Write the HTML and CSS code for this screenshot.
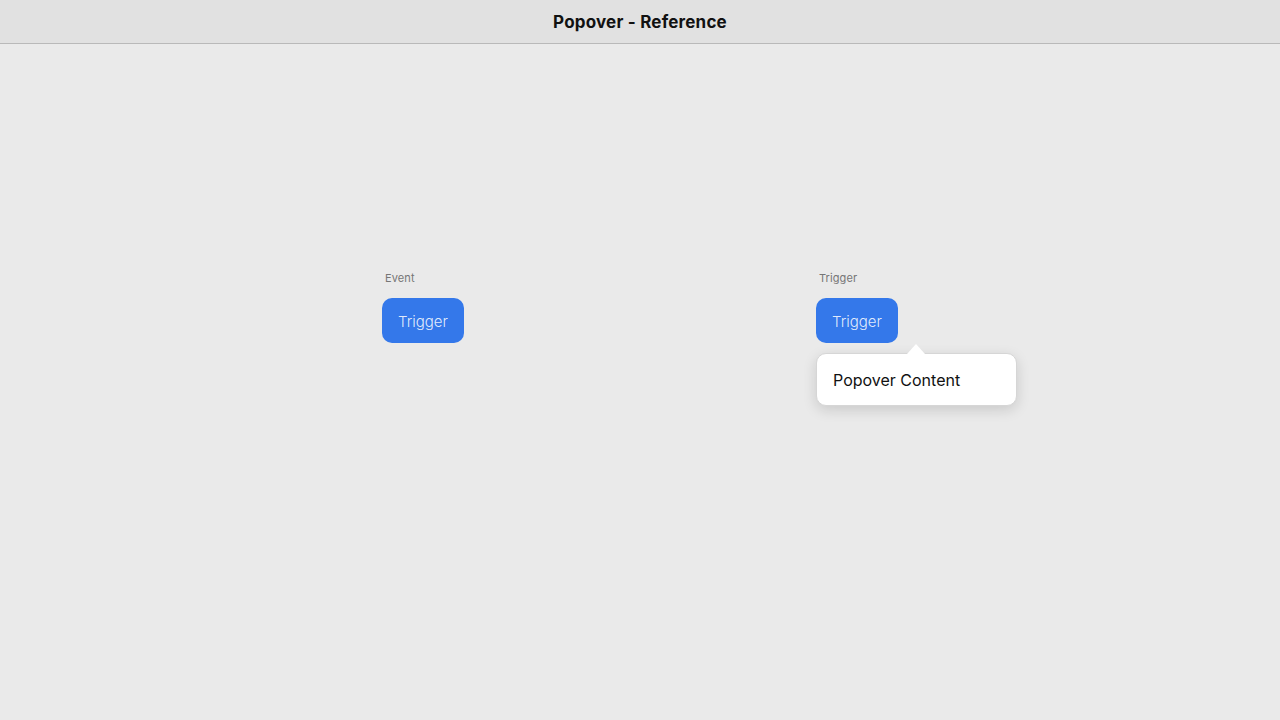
FILE: index.html
```html
<!DOCTYPE html>
<html lang="en">
<head>
    <meta charset="UTF-8">
    <meta name="viewport" content="width=device-width, initial-scale=1.0">
    <title>Popover - Reference</title>
    <link rel="stylesheet" href="styles.css">
</head>
<body>
    <header class="titlebar">Popover - Reference</header>

    <main class="stage">
        <div class="demo">
            <span class="demo-label">Event</span>
            <button class="trigger">Trigger</button>
        </div>

        <div class="demo">
            <span class="demo-label">Trigger</span>
            <div class="anchor">
                <button class="trigger">Trigger</button>
                <div class="popover">
                    <span class="popover-arrow"></span>
                    <p class="popover-body">Popover Content</p>
                </div>
            </div>
        </div>
    </main>
</body>
</html>
```

FILE: styles.css
```css
body {
    margin: 0;
    font-family: Inter, 'Noto Sans', sans-serif;
    background-color: #eaeaea;
    color: #111;
    height: 720px;
    overflow: hidden;
}
.titlebar {
    height: 43px;
    line-height: 45px;
    text-align: center;
    font-size: 17px;
    font-weight: 700;
    letter-spacing: 0.2px;
    color: #111;
    background-color: #e1e1e1;
    border-bottom: 1px solid #b9b9b9;
}
.stage {
    display: flex;
    justify-content: center;
    gap: 352px;
    padding-top: 227px;
}
.demo {
    display: flex;
    flex-direction: column;
    gap: 13px;
}
.demo-label {
    font-size: 11px;
    line-height: 14px;
    letter-spacing: 0.1px;
    color: #767676;
    padding-left: 3px;
}
.anchor {
    position: relative;
}
.trigger {
    width: 82px;
    height: 45px;
    border: none;
    border-radius: 10px;
    background-color: #3478ea;
    color: rgba(255, 255, 255, 0.86);
    font-family: inherit;
    font-size: 15px;
    font-weight: 300;
    padding: 2px 0 0;
    cursor: pointer;
}
.popover {
    position: absolute;
    top: 55px;
    left: 0;
    width: 199px;
    background-color: #fff;
    border-radius: 10px;
    border: 1px solid #d6d6d6;
    box-shadow: 0 4px 14px rgba(0, 0, 0, 0.14);
}
.popover-arrow {
    position: absolute;
    top: -10px;
    left: 90px;
    width: 0;
    height: 0;
    border-left: 9px solid transparent;
    border-right: 9px solid transparent;
    border-bottom: 10px solid #fff;
}
.popover-body {
    margin: 0;
    padding: 17px 15px 15px 16px;
    font-size: 16px;
    line-height: 19px;
    color: #111;
}
```
